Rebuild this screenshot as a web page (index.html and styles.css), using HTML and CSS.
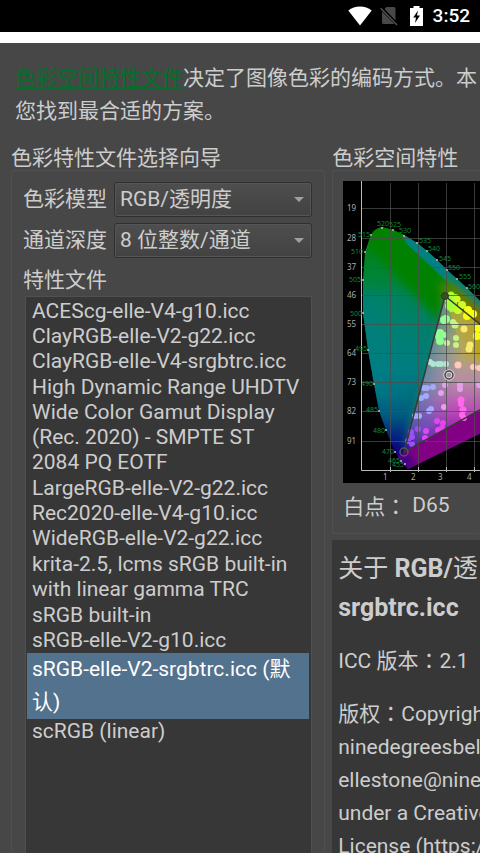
FILE: index.html
```html
<!DOCTYPE html>
<html lang="zh-CN">
<head>
<meta charset="utf-8">
<meta name="viewport" content="width=device-width, initial-scale=1">
<title>色彩空间特性文件</title>
<link rel="stylesheet" href="styles.css">
</head>
<body>
<header class="status">
  <svg class="status-icon wifi" viewBox="0 0 24 20" aria-hidden="true"><path fill="#fff" d="M12 19.500L.3 4.600C3.500 1.800 7.600.4 12 .4s8.500 1.400 11.700 4.200z"/></svg>
  <svg class="status-icon sim" viewBox="0 0 18 20" aria-hidden="true"><path fill="#484848" d="M6.500 1H14q1.500 0 1.500 1.500v12L4.500 3zM2 5.500L14.500 18H3.500Q2 18 2 16.500z"/><path d="M.7 2.300L17 19" stroke="#555" stroke-width="1.300"/></svg>
  <svg class="status-icon battery" viewBox="0 0 13 20" aria-hidden="true"><path fill="#fff" d="M3.500 0h6v2H13v18H0V2h3.500z"/><path d="M8 4.500L3.200 11.500H6L5 17l5-7.500H7z"/></svg>
  <time>3:52</time>
</header>
<main class="dialog">
  <p class="intro"><a href="#profile">色彩空间特性文件</a>决定了图像色彩的编码方式。本<br>您找到最合适的方案。</p>
  <div class="columns">
    <section class="wizard">
      <h2 class="group-title">色彩特性文件选择向导</h2>
      <div class="group wizard-group">
        <div class="field">
          <label for="model">色彩模型</label>
          <div class="combo"><select id="model"><option>RGB/透明度</option></select></div>
        </div>
        <div class="field">
          <label for="depth">通道深度</label>
          <div class="combo"><select id="depth"><option>8 位整数/通道</option></select></div>
        </div>
        <h3 class="list-title" id="profiles">特性文件</h3>
        <ul class="profiles" role="listbox" aria-labelledby="profiles">
          <li role="option">ACEScg-elle-V4-g10.icc</li>
          <li role="option">ClayRGB-elle-V2-g22.icc</li>
          <li role="option">ClayRGB-elle-V4-srgbtrc.icc</li>
          <li role="option" class="multi">High Dynamic Range UHDTV Wide Color Gamut Display (Rec. 2020) - SMPTE ST 2084 PQ EOTF</li>
          <li role="option">LargeRGB-elle-V2-g22.icc</li>
          <li role="option">Rec2020-elle-V4-g10.icc</li>
          <li role="option">WideRGB-elle-V2-g22.icc</li>
          <li role="option" class="multi">krita-2.5, lcms sRGB built-in with linear gamma TRC</li>
          <li role="option">sRGB built-in</li>
          <li role="option">sRGB-elle-V2-g10.icc</li>
          <li role="option" class="selected" aria-selected="true">sRGB-elle-V2-srgbtrc.icc (默认)</li>
          <li role="option">scRGB (linear)</li>
        </ul>
      </div>
    </section>
    <section class="details" id="profile">
      <h2 class="group-title">色彩空间特性</h2>
      <div class="group space-group">
        <svg class="chart" viewBox="0 0 302 302" role="img" aria-label="色度图">
          <defs>
            <clipPath id="locus"><path d="M65 288L58 280 52 271 43 249 36 230 31 203 25 169 20 132 20 99 22 71 28 54Q32 47 39 46L50 49 61 54 74 62 84 70 94 79 104 89 114 98 124 107 135 118 220 203 226 209z"/></clipPath>
            <clipPath id="gamut"><path d="M102 115L61 271 200 194z"/></clipPath>
            <linearGradient id="left" x1="0" y1="0" x2="0" y2="1"><stop offset="0" stop-color="#008000"/><stop offset=".22" stop-color="#008438"/><stop offset=".42" stop-color="#008068"/><stop offset=".58" stop-color="#007c80"/><stop offset=".76" stop-color="#005c80"/><stop offset=".9" stop-color="#080080"/><stop offset="1" stop-color="#500080"/></linearGradient>
            <linearGradient id="cyan" gradientUnits="userSpaceOnUse" x1="20" y1="0" x2="100" y2="0"><stop offset="0" stop-color="#008088" stop-opacity=".6"/><stop offset="1" stop-color="#008080" stop-opacity="0"/></linearGradient>
            <linearGradient id="olive" gradientUnits="userSpaceOnUse" x1="92" y1="95" x2="140" y2="135"><stop offset="0" stop-color="#2a8500"/><stop offset=".5" stop-color="#6e7d00"/><stop offset="1" stop-color="#857000"/></linearGradient>
            <linearGradient id="inside" gradientUnits="userSpaceOnUse" x1="104" y1="115" x2="104" y2="255"><stop offset="0" stop-color="#87bd26"/><stop offset=".18" stop-color="#a8a64b"/><stop offset=".42" stop-color="#b0a582"/><stop offset=".62" stop-color="#b88aa5"/><stop offset=".83" stop-color="#b848b7"/><stop offset="1" stop-color="#980ca5"/></linearGradient>
            <linearGradient id="side" gradientUnits="userSpaceOnUse" x1="68" y1="200" x2="112" y2="210"><stop offset="0" stop-color="#3b829e"/><stop offset="1" stop-color="#6c85b4" stop-opacity="0"/></linearGradient>
            <radialGradient id="blue" gradientUnits="userSpaceOnUse" cx="61" cy="271" r="62"><stop offset="0" stop-color="#2d00a4"/><stop offset=".45" stop-color="#6048ba" stop-opacity=".75"/><stop offset="1" stop-color="#8060c0" stop-opacity="0"/></radialGradient>
            <linearGradient id="yellow" gradientUnits="userSpaceOnUse" x1="110" y1="145" x2="142" y2="145"><stop offset="0" stop-color="#c0a420" stop-opacity="0"/><stop offset="1" stop-color="#c2a600"/></linearGradient>
            <filter id="soft"><feGaussianBlur stdDeviation="4"/></filter>
          </defs>
          <rect width="302" height="302"/>
          <g clip-path="url(#locus)">
            <path fill="url(#left)" d="M10 40h220v255H10z"/>
            <path fill="url(#cyan)" d="M10 110h90v110H10z" filter="url(#soft)"/>
            <path fill="#008200" d="M20 60L28 36h30L150 145 100 145z" filter="url(#soft)"/>
            <path fill="#008080" d="M57 46l92 78-5 12-39-34-25-24-17-16z"/>
            <path fill="url(#olive)" d="M96 101l12-1 60 54-30 10-36-34z" filter="url(#soft)"/>
            <path fill="#247b5d" d="M101 115l-17 67-24 90 15-21 35-110z" filter="url(#soft)"/>
            <path fill="#820084" d="M50 280l11-9 139-77 40 22L65 300z"/>
            <path fill="#300086" d="M51 268l11 3 10 12-10 10z" filter="url(#soft)"/>
          </g>
          <g clip-path="url(#gamut)">
            <path fill="url(#inside)" d="M50 110h160v170H50z"/>
            <path fill="url(#yellow)" d="M105 110h80v70h-75z" filter="url(#soft)"/>
            <path fill="url(#side)" d="M102 115L61 271l70-61z"/>
            <path fill="url(#blue)" d="M50 200h100v80H50z"/>
          </g>
          <g>
            <g fill="#a4ff38"><circle cx="108" cy="114" r="3.500"/><circle cx="112" cy="117" r="4"/><circle cx="106" cy="119" r="4"/><circle cx="106" cy="125" r="4"/><circle cx="110" cy="123" r="4"/><circle cx="109" cy="127" r="4"/></g>
            <g fill="#ccff25"><circle cx="114" cy="118" r="3.500"/><circle cx="119" cy="124" r="4"/><circle cx="115" cy="129" r="4"/></g>
            <g fill="#f8ff0d"><circle cx="125" cy="129" r="4"/><circle cx="124" cy="135" r="4"/><circle cx="130" cy="133" r="4"/><circle cx="135" cy="147" r="4"/><circle cx="134" cy="155" r="4"/></g>
            <g fill="#91ff91"><circle cx="103" cy="138" r="4"/><circle cx="101" cy="139" r="4"/><circle cx="97" cy="152" r="4"/><circle cx="96" cy="155" r="4"/><circle cx="97" cy="160" r="4"/><circle cx="101" cy="154" r="3"/></g>
            <g fill="#c6f584"><circle cx="110" cy="141" r="3"/><circle cx="112" cy="144" r="3.500"/><circle cx="113" cy="157" r="3"/><circle cx="104" cy="162" r="3"/><circle cx="113" cy="164" r="3"/></g>
            <g fill="#f8e96f"><circle cx="121" cy="148" r="3.500"/><circle cx="127" cy="164" r="3.500"/><circle cx="126" cy="168" r="3.500"/></g>
            <g fill="#aee6d2"><circle cx="87" cy="181" r="3"/><circle cx="90" cy="183" r="3"/><circle cx="95" cy="183" r="3"/><circle cx="98" cy="183" r="3"/><circle cx="103" cy="183" r="3"/></g>
            <g fill="#ffc9bd"><circle cx="115" cy="184" r="3.500"/><circle cx="130" cy="186" r="3"/><circle cx="136" cy="187" r="3"/></g>
            <g fill="#a5a9fb"><circle cx="81" cy="207" r="3"/><circle cx="84" cy="207" r="3"/><circle cx="90" cy="206" r="3"/><circle cx="78" cy="217" r="3"/><circle cx="83" cy="215" r="3"/><circle cx="86" cy="230" r="3"/><circle cx="88" cy="228" r="3"/><circle cx="72" cy="235" r="3"/><circle cx="76" cy="235" r="3"/></g>
            <g fill="#e5a0eb"><circle cx="98" cy="212" r="3"/><circle cx="102" cy="204" r="3"/><circle cx="117" cy="204" r="3"/><circle cx="117" cy="208" r="3"/><circle cx="136" cy="204" r="3"/><circle cx="101" cy="226" r="3"/></g>
            <g fill="#ff67ee"><circle cx="118" cy="219" r="3.500"/><circle cx="118" cy="223" r="3"/><circle cx="120" cy="229" r="3.500"/><circle cx="119" cy="234" r="3"/><circle cx="121" cy="237" r="3"/></g>
            <g fill="#e545ee"><circle cx="94" cy="240" r="3"/><circle cx="100" cy="242" r="3"/><circle cx="95" cy="249" r="3"/><circle cx="99" cy="247" r="3"/><circle cx="83" cy="250" r="3"/><circle cx="82" cy="257" r="3"/></g>
            <g fill="#9d50f5"><circle cx="75" cy="248" r="3"/><circle cx="68" cy="251" r="3"/><circle cx="69" cy="256" r="3"/><circle cx="65" cy="260" r="3"/><circle cx="69" cy="263" r="3"/></g>
          </g>
          <g stroke="#4c4c4c" stroke-opacity=".75"><path d="M47.500 2v287M75.500 2v287M103.500 2v287M131.500 2v287M159.500 2v287M187.500 2v287M19 27.500h265M19 57.500h265M19 86.500h265M19 114.500h265M19 143.500h265M19 172.500h265M19 201.500h265M19 230.500h265M19 260.500h265"/></g>
          <path fill="none" stroke="#383838" stroke-width="1.500" d="M102 115L61 271 200 194z"/>
          <circle cx="102" cy="115" r="3.500" fill="#355319" stroke="#333"/>
          <circle cx="61" cy="271" r="4" fill="none" stroke="#555" stroke-width="1.500"/>
          <circle cx="106" cy="194" r="4" fill="none" stroke="#eee" stroke-opacity=".7" stroke-width="3.500"/><circle cx="106" cy="194" r="4" fill="none" stroke="#444" stroke-width="1.500"/>
          <path fill="none" stroke="#bbb" d="M18.500 0v289.500H285M47.500 286v5M75.500 286v5M103.500 286v5M131.500 286v5"/>
          <g fill="#bbb"><circle cx="39" cy="47" r="1"/><circle cx="50" cy="49" r="1"/><circle cx="61" cy="55" r="1"/><circle cx="74" cy="62" r="1"/><circle cx="84" cy="70" r="1"/><circle cx="94" cy="79" r="1"/><circle cx="104" cy="89" r="1"/><circle cx="114" cy="98" r="1"/><circle cx="124" cy="107" r="1"/><circle cx="28" cy="54" r="1"/><circle cx="22" cy="71" r="1"/><circle cx="20" cy="99" r="1"/><circle cx="20" cy="132" r="1"/><circle cx="25" cy="169" r="1"/><circle cx="31" cy="203" r="1"/><circle cx="36" cy="230" r="1"/><circle cx="43" cy="249" r="1"/><circle cx="52" cy="271" r="1"/><circle cx="58" cy="280" r="1"/><circle cx="62" cy="283" r="1"/></g>
          <g class="wave"><text x="34" y="45">520</text><text x="46" y="46">525</text><text x="56" y="52">530</text><text x="76" y="62">535</text><text x="85" y="70">540</text><text x="96" y="80">545</text><text x="105" y="89">550</text><text x="116" y="98">555</text><text x="125" y="108">560</text></g>
          <g class="wave start"><text x="27" y="56">515</text><text x="20" y="73">510</text><text x="18" y="101">505</text><text x="19" y="135">500</text><text x="24" y="170">495</text><text x="30" y="205">490</text><text x="35" y="231">485</text><text x="42" y="252">480</text><text x="51" y="273">470</text><text x="57" y="282">465</text><text x="61" y="286">455</text></g>
          <g class="axis"><text x="4" y="30">19</text><text x="4" y="60">28</text><text x="4" y="89">37</text><text x="4" y="117">46</text><text x="4" y="146">55</text><text x="4" y="175">64</text><text x="4" y="204">73</text><text x="4" y="233">82</text><text x="4" y="263">91</text><text x="40" y="299">1</text><text x="68" y="299">2</text><text x="95" y="299">3</text><text x="124" y="299">4</text></g>
        </svg>
        <p class="white-point"><span>白点<span lang="zh-TW" class="colon">：</span></span><span>D65</span></p>
      </div>
      <article class="about">
        <h3><span class="han">关于</span> RGB/<span class="han">透</span><br>srgbtrc.icc</h3>
        <p>ICC 版本<span lang="zh-TW" class="colon">：</span>2.1</p>
        <p>版权<span lang="zh-TW" class="colon">：</span>Copyright 2016, Elle Stone (https://<br>ninedegreesbelow.com/,<br>ellestone@ninedegreesbelow.com),<br>under a Creative Commons<br>License (https://creativecommons.org)</p>
      </article>
    </section>
  </div>
</main>
</body>
</html>
```
FILE: styles.css
```css
* { box-sizing: border-box; }
body, h2, h3, p, ul { margin: 0; padding: 0; }
h2, h3 { font-size: inherit; font-weight: 400; }
body {
  display: flex;
  flex-direction: column;
  height: 100vh;
  overflow: hidden;
  background: #474747;
  color: #cdcdcd;
  font-family: Roboto, "Noto Sans CJK SC", sans-serif;
  font-size: 21px;
  line-height: 33px;
}
.status {
  flex: none;
  display: flex;
  align-items: center;
  justify-content: flex-end;
  height: 43px;
  padding-right: 10px;
  background: #000;
  border-bottom: 11px solid #fff;
  color: #fff;
  font-size: 19px;
  font-weight: 500;
  line-height: 32px;
}
.status-icon { flex: none; height: 20px; }
.wifi { width: 24px; margin-right: 8px; }
.sim { width: 18px; margin-right: 12px; }
.battery { width: 13px; margin-right: 10px; }
.dialog {
  flex: 1;
  min-height: 0;
  display: flex;
  flex-direction: column;
  padding: 19px 0 0 11px;
}
.intro { padding-left: 4px; margin-bottom: 18px; white-space: nowrap; }
.intro a { color: #0c6a2e; font-weight: 500; text-underline-offset: 3px; }
.columns {
  flex: 1;
  min-height: 0;
  display: grid;
  grid-template-columns: 67% 1fr;
  grid-template-rows: minmax(0, 1fr);
  gap: 7px;
}
.wizard, .details { display: flex; flex-direction: column; min-width: 0; min-height: 0; }
.group-title { line-height: 24px; white-space: nowrap; }
.group { border: 1px solid #505050; border-radius: 3px; }
.wizard-group {
  flex: 1;
  display: flex;
  flex-direction: column;
  min-height: 0;
  padding: 11px 12px 0 11px;
  border-bottom: 0;
}
.field { display: flex; align-items: center; gap: 7px; height: 34px; margin-bottom: 7px; }
.field label { flex: none; }
.combo { position: relative; flex: 1; min-width: 0; }
.combo::after {
  content: "";
  position: absolute;
  right: 8px;
  top: 15px;
  border: 5px solid transparent;
  border-top-color: #a0a0a0;
  border-bottom: 0;
}
select {
  display: block;
  appearance: none;
  width: 100%;
  height: 35px;
  padding: 0 5px;
  border: 1px solid #303030;
  border-radius: 3px;
  background: linear-gradient(#4e4e4e, #424242);
  box-shadow: inset 0 0 0 1px #555;
  color: inherit;
  font: inherit;
}
.list-title { line-height: 32px; }
.profiles {
  flex: 1;
  min-height: 0;
  margin-left: 2px;
  padding: 2px 2px 0 1px;
  border: 1px solid #505050;
  border-bottom: 0;
  background: #373737;
  list-style: none;
  line-height: 25px;
}
.profiles li { padding: 0 4px 0 5px; }
.profiles .multi { padding-top: 1px; padding-bottom: 1px; }
.profiles .selected { background: #53728e; color: #fff; line-height: 33px; }
.space-group { flex: none; border-right: 0; padding: 10px 0 10px 10px; overflow: hidden; }
.chart { display: block; width: 302px; height: 302px; }
.chart text { font-family: "Noto Sans", sans-serif; }
.wave { fill: #0f8a3a; font-size: 7px; }
.start { text-anchor: end; }
.axis { fill: #aaa; font-size: 8px; }
.white-point { display: flex; gap: 6px; margin-top: 6px; white-space: nowrap; line-height: 32px; }
.colon { font-family: "Noto Sans CJK TC", sans-serif; }
.about {
  flex: 1;
  min-height: 0;
  overflow: hidden;
  margin-top: 6px;
  padding: 9px 0 0 6px;
  background: #373737;
  white-space: nowrap;
}
.about h3 { font-size: 25px; font-weight: 700; line-height: 39px; margin-bottom: 16px; }
.about .han { font-weight: 400; }
.about p { margin-bottom: 18px; }
```
